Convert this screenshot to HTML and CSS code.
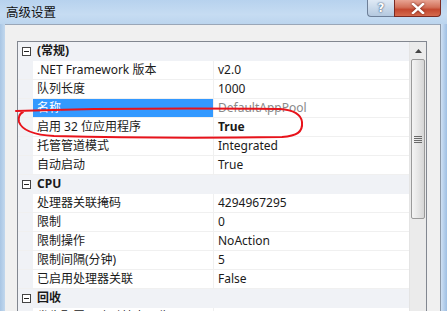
FILE: index.html
```html
<!DOCTYPE html>
<html lang="zh-CN">
<head>
<meta charset="utf-8">
<title>高级设置</title>
<link rel="stylesheet" href="styles.css">
</head>
<body>
<div class="window">
  <div class="titlebar">
    <span class="title">高级设置</span>
    <div class="caption-buttons">
      <div class="btn help">?</div>
      <div class="btn close">
        <svg width="14" height="11" viewBox="0 0 14 11"><path d="M2 1 L12 10 M12 1 L2 10" stroke="#fff" stroke-width="2.4" stroke-linecap="square" fill="none"/></svg>
      </div>
    </div>
  </div>
  <div class="frame">
    <div class="side left"></div>
    <div class="panel">
      <div class="grid">
        <div class="rows">
          <div class="row cat"><span class="gutter"><i class="toggle"></i></span><span class="cat-name">(常规)</span></div>
          <div class="row"><span class="gutter"></span><span class="name">.NET Framework 版本</span><span class="value">v2.0</span></div>
          <div class="row"><span class="gutter"></span><span class="name">队列长度</span><span class="value">1000</span></div>
          <div class="row"><span class="gutter"></span><span class="name selected">名称</span><span class="value readonly">DefaultAppPool</span></div>
          <div class="row"><span class="gutter"></span><span class="name">启用 32 位应用程序</span><span class="value bold">True</span></div>
          <div class="row"><span class="gutter"></span><span class="name">托管管道模式</span><span class="value">Integrated</span></div>
          <div class="row"><span class="gutter"></span><span class="name">自动启动</span><span class="value">True</span></div>
          <div class="row cat"><span class="gutter"><i class="toggle"></i></span><span class="cat-name">CPU</span></div>
          <div class="row"><span class="gutter"></span><span class="name">处理器关联掩码</span><span class="value">4294967295</span></div>
          <div class="row"><span class="gutter"></span><span class="name">限制</span><span class="value">0</span></div>
          <div class="row"><span class="gutter"></span><span class="name">限制操作</span><span class="value">NoAction</span></div>
          <div class="row"><span class="gutter"></span><span class="name">限制间隔(分钟)</span><span class="value">5</span></div>
          <div class="row"><span class="gutter"></span><span class="name">已启用处理器关联</span><span class="value">False</span></div>
          <div class="row cat"><span class="gutter"><i class="toggle"></i></span><span class="cat-name">回收</span></div>
          <div class="row"><span class="gutter"></span><span class="name">发生配置更改时禁止回收</span><span class="value">False</span></div>
        </div>
        <div class="scrollbar">
          <div class="arrow"><svg width="7" height="4" viewBox="0 0 7 4"><path d="M0 4 L3.5 0 L7 4 Z" fill="#444"/></svg></div>
          <div class="thumb"><span class="grip"></span></div>
          <div class="track"></div>
        </div>
      </div>
    </div>
    <div class="side right"></div>
  </div>
  <svg class="annotation" width="300" height="40" viewBox="0 0 300 40">
    <path d="M2 5 C60 3, 160 2, 266 3 C280 4, 287 8, 288 16 C289 26, 283 30, 268 31 C200 32, 120 32, 40 30 C20 29, 8 24, 5 16 C4 11, 5 8, 9 6" stroke="#e8131b" stroke-width="2" fill="none" stroke-linecap="round"/>
  </svg>
</div>
</body>
</html>
```
FILE: styles.css
```css
* { box-sizing: border-box; }
html, body { margin: 0; padding: 0; }
body {
  width: 447px;
  height: 311px;
  overflow: hidden;
  font-family: "Noto Sans", "Noto Sans CJK SC", sans-serif;
  font-size: 12px;
  color: #1a1a1a;
  background: #bcd4ec;
}
.window {
  position: relative;
  width: 447px;
  height: 311px;
  display: flex;
  flex-direction: column;
}
.titlebar {
  height: 24px;
  flex: none;
  display: flex;
  align-items: flex-start;
  justify-content: space-between;
  background: linear-gradient(180deg, #b7d2ee 0%, #c6dcf2 60%, #bcd5ee 100%);
}
.title {
  padding: 3px 0 0 6px;
  font-family: "Noto Sans CJK SC", sans-serif;
  font-size: 12.5px;
  color: #111;
  line-height: 18px;
}
.caption-buttons {
  display: flex;
  margin-right: 6px;
}
.btn {
  height: 17px;
  display: flex;
  align-items: center;
  justify-content: center;
  border: 1px solid #6d7f98;
  border-top: none;
}
.help {
  width: 27px;
  border-radius: 0 0 0 4px;
  border-right: none;
  background: linear-gradient(180deg, #dfe9f5 0%, #c9d9ea 50%, #b4c8df 100%);
  color: #fff;
  font-family: "DejaVu Sans", sans-serif;
  font-weight: bold;
  font-size: 12px;
  text-shadow: 0 0 2px #41577a, 0 0 1px #41577a;
}
.close {
  width: 47px;
  border-radius: 0 0 4px 0;
  border-color: #7a2a22;
  background: linear-gradient(180deg, #e8a493 0%, #d3715a 45%, #c4482f 60%, #d56b4e 100%);
}
.close svg { filter: drop-shadow(0 0 1px #6a1a10); }
.frame {
  flex: 1;
  display: flex;
  min-height: 0;
}
.side.left {
  width: 5px;
  background: linear-gradient(90deg, #a9c6e4, #c2d8ee);
}
.side.right {
  width: 7px;
  border-left: 1px solid #8d99a8;
  background: linear-gradient(90deg, #cfe0f3, #9ebfe3);
}
.panel {
  flex: 1;
  background: #f0f0f0;
  border-top: 1px solid #9aa7b8;
  padding: 16px 13px 0 12px;
  display: flex;
  min-height: 0;
}
.grid {
  flex: 1;
  display: flex;
  border: 1px solid #828790;
  border-bottom: none;
  background: #fff;
  min-height: 0;
  overflow: hidden;
}
.rows {
  flex: 1;
  display: flex;
  flex-direction: column;
}
.row {
  height: 19px;
  flex: none;
  display: flex;
  line-height: 18px;
  border-bottom: 1px solid #f0f0f0;
}
.gutter {
  width: 15px;
  flex: none;
  background: #f0f2f6;
  display: flex;
  align-items: center;
  justify-content: center;
}
.row.cat { background: #f0f2f6; border-bottom-color: #f0f2f6; }
.toggle {
  width: 9px;
  height: 9px;
  border: 1px solid #444;
  position: relative;
  margin-left: 2px;
  background: #fff;
}
.toggle::after {
  content: "";
  position: absolute;
  left: 1px;
  right: 1px;
  top: 3px;
  height: 1px;
  background: #222;
}
.cat-name {
  padding-left: 4px;
  font-weight: bold;
  font-family: "Noto Sans", "Noto Sans CJK SC", sans-serif;
}
.name {
  width: 181px;
  flex: none;
  padding-left: 4px;
  border-right: 1px solid #f0f0f0;
  white-space: nowrap;
  overflow: hidden;
}
.name.selected {
  background: #3399ff;
  color: #fff;
}
.value {
  flex: 1;
  padding-left: 4px;
  white-space: nowrap;
  overflow: hidden;
}
.value.readonly { color: #8a8a8a; }
.value.bold { font-weight: bold; }
.scrollbar {
  width: 17px;
  flex: none;
  display: flex;
  flex-direction: column;
  background: #ebebeb;
  border-left: 1px solid #e4e4e4;
}
.arrow {
  height: 17px;
  display: flex;
  align-items: center;
  justify-content: center;
}
.thumb {
  height: 160px;
  margin: 0 1px;
  border: 1px solid #9a9a9a;
  border-radius: 2px;
  background: linear-gradient(90deg, #f4f4f4 0%, #e6e6e6 50%, #d6d6d6 100%);
  display: flex;
  align-items: center;
  justify-content: center;
}
.grip {
  width: 8px;
  height: 7px;
  background: repeating-linear-gradient(180deg, #6a6a6a 0 1px, transparent 1px 2px);
}
.track { flex: 1; }
.annotation {
  position: absolute;
  left: 14px;
  top: 106px;
  overflow: visible;
}
```
